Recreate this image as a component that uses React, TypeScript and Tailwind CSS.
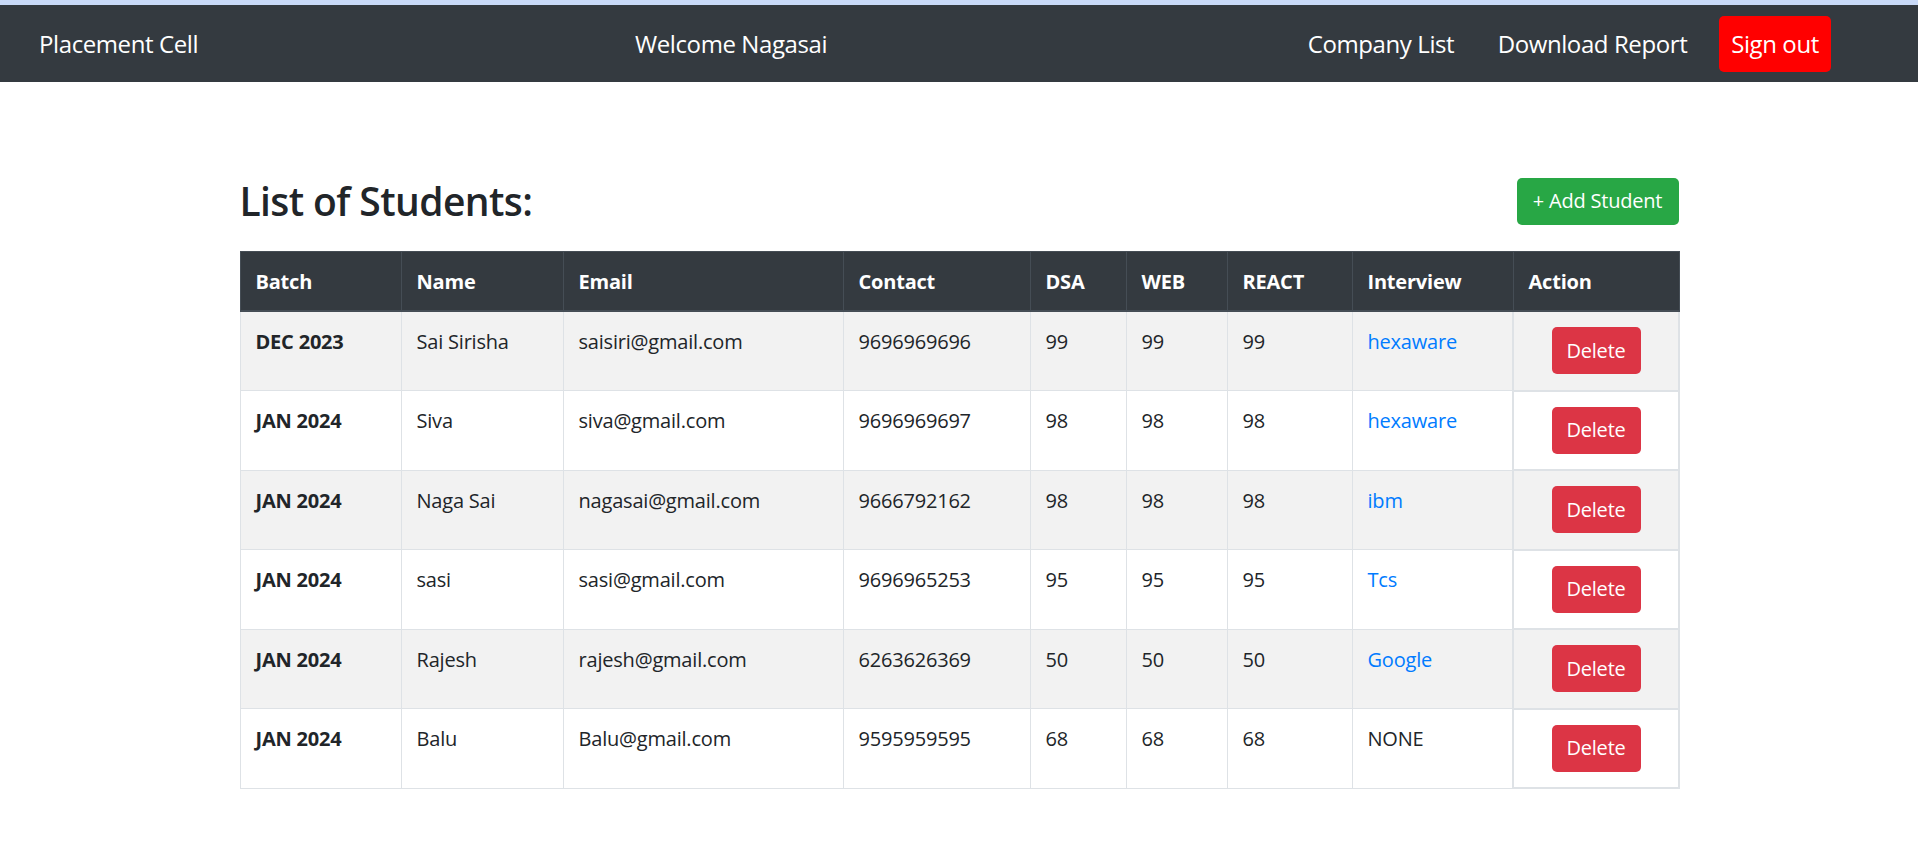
import React, { FC } from "react";

type Student = {
  batch: string;
  name: string;
  email: string;
  contact: string;
  dsa: number;
  web: number;
  react: number;
  interview: string | null;
};

const students: Student[] = [
  { batch: "DEC 2023", name: "Sai Sirisha", email: "saisiri@gmail.com", contact: "9696969696", dsa: 99, web: 99, react: 99, interview: "hexaware" },
  { batch: "JAN 2024", name: "Siva", email: "siva@gmail.com", contact: "9696969697", dsa: 98, web: 98, react: 98, interview: "hexaware" },
  { batch: "JAN 2024", name: "Naga Sai", email: "nagasai@gmail.com", contact: "9666792162", dsa: 98, web: 98, react: 98, interview: "ibm" },
  { batch: "JAN 2024", name: "sasi", email: "sasi@gmail.com", contact: "9696965253", dsa: 95, web: 95, react: 95, interview: "Tcs" },
  { batch: "JAN 2024", name: "Rajesh", email: "rajesh@gmail.com", contact: "6263626369", dsa: 50, web: 50, react: 50, interview: "Google" },
  { batch: "JAN 2024", name: "Balu", email: "Balu@gmail.com", contact: "9595959595", dsa: 68, web: 68, react: 68, interview: null },
];

const headers = ["Batch", "Name", "Email", "Contact", "DSA", "WEB", "REACT", "Interview", "Action"];
const widths = ["w-[161px]", "w-[162px]", "w-[280px]", "w-[187px]", "w-[96px]", "w-[101px]", "w-[125px]", "w-[161px]", "w-[166px]"];

const Navbar: FC = () => {
  return (
    <nav className="flex h-[77px] items-center whitespace-nowrap bg-[#343a40] text-[24px] tracking-[-0.4px] text-white">
      <div className="w-[635px] pl-[39px]">
        <a href="#">Placement Cell</a>
      </div>
      <span>Welcome Nagasai</span>
      <div className="ml-auto mr-[87px] flex items-center">
        <a href="#" className="w-[150px] text-center">Company List</a>
        <a href="#" className="ml-[40px] w-[193px] text-center">Download Report</a>
        <button className="ml-[30px] h-[56px] w-[112px] rounded-[5px] bg-[#ff0000] text-center text-white">
          Sign out
        </button>
      </div>
    </nav>
  );
};

const StudentTable: FC = () => {
  return (
    <table className="w-[1439px] table-fixed border-collapse text-[20px] leading-[30px] tracking-[-0.2px] text-[#212529]">
      <colgroup>
        {widths.map((w, i) => (
          <col key={i} className={w} />
        ))}
      </colgroup>
      <thead>
        <tr className="bg-[#343a40] text-white">
          {headers.map((h) => (
            <th key={h} className="border border-b-2 border-[#454d55] px-[15px] pt-[15px] pb-[13px] text-left font-bold">
              {h}
            </th>
          ))}
        </tr>
      </thead>
      <tbody>
        {students.map((s, i) => (
          <tr key={i} className={`h-[79.5px] ${i % 2 === 0 ? "bg-[#f2f2f2]" : "bg-white"}`}>
            <td className="border border-[#dee2e6] px-[15px] pt-[15px] align-top font-bold">{s.batch}</td>
            <td className="border border-[#dee2e6] px-[15px] pt-[15px] align-top">{s.name}</td>
            <td className="border border-[#dee2e6] px-[15px] pt-[15px] align-top">{s.email}</td>
            <td className="border border-[#dee2e6] px-[15px] pt-[15px] align-top">{s.contact}</td>
            <td className="border border-[#dee2e6] px-[15px] pt-[15px] align-top">{s.dsa}</td>
            <td className="border border-[#dee2e6] px-[15px] pt-[15px] align-top">{s.web}</td>
            <td className="border border-[#dee2e6] px-[15px] pt-[15px] align-top">{s.react}</td>
            <td className="border border-[#dee2e6] px-[15px] pt-[15px] align-top">
              {s.interview ? (
                <a href="#" className="text-[#007bff]">{s.interview}</a>
              ) : (
                "NONE"
              )}
            </td>
            <td className="border-2 border-[#dee2e6] px-[15px] py-[15px] text-center">
              <button className="h-[47px] w-[89px] rounded-[5px] bg-[#dc3545] text-white">Delete</button>
            </td>
          </tr>
        ))}
      </tbody>
    </table>
  );
};

const App: FC = () => {
  return (
    <div className="min-h-screen bg-white font-['Open_Sans',sans-serif]">
      <div className="h-[5px] bg-[#c9daf8]" />
      <Navbar />
      <main className="mx-auto w-[1439px] pt-[95px]">
        <div className="flex items-center justify-between">
          <h2 className="text-[39px] font-semibold leading-[48px] tracking-[-0.6px] text-[#212529]">List of Students:</h2>
          <button className="h-[47px] w-[162px] rounded-[5px] bg-[#28a745] text-[20px] tracking-[-0.2px] text-white">
            + Add Student
          </button>
        </div>
        <div className="mt-[26px]">
          <StudentTable />
        </div>
      </main>
    </div>
  );
};

export default App;
